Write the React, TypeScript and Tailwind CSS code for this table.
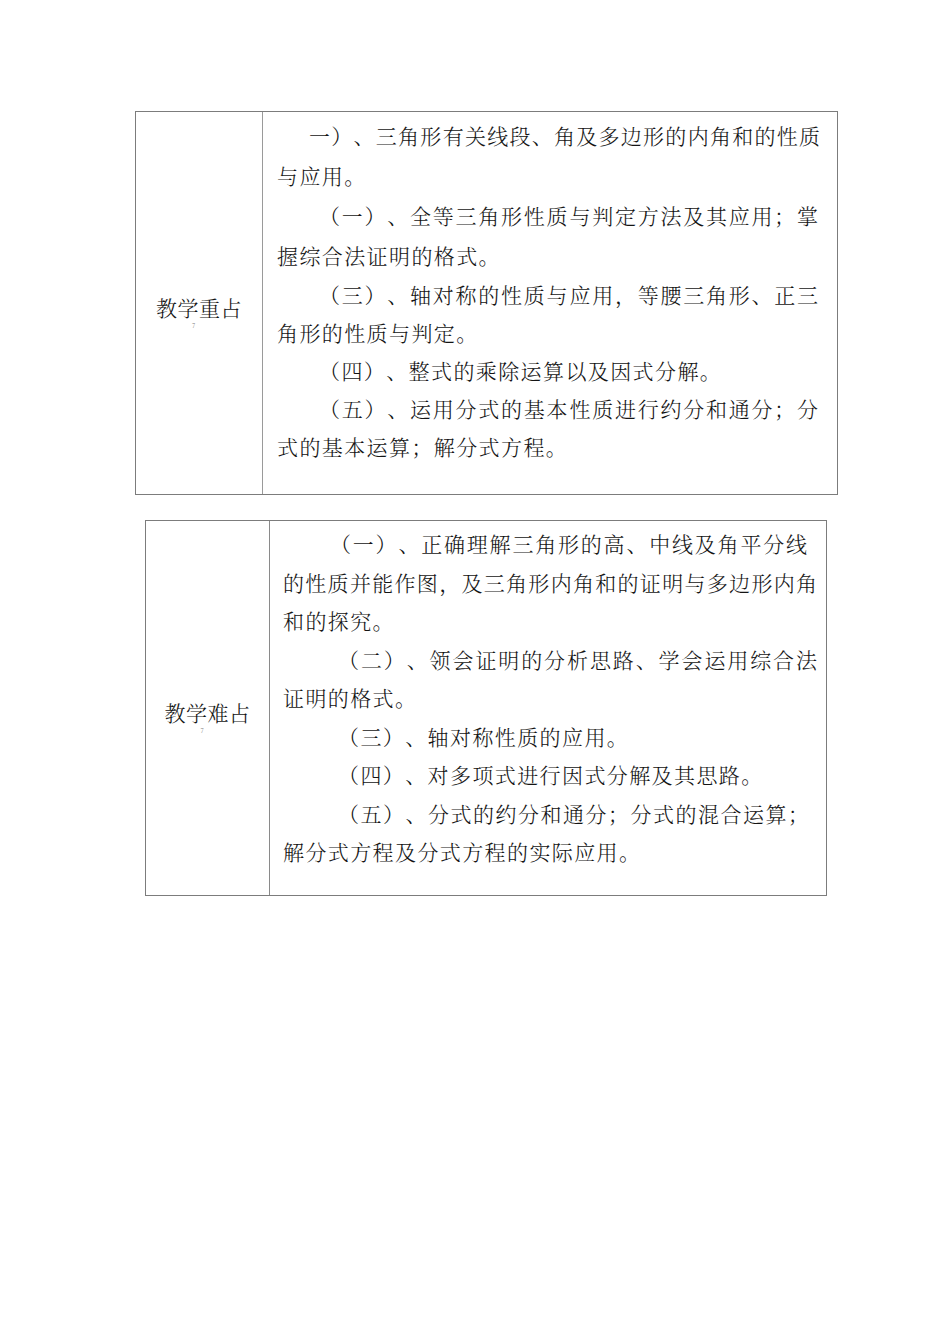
type Line = { t: string; indent?: number; full?: boolean; mr?: number };

const font = {
  fontFamily: "'Noto Serif CJK SC', 'Noto Sans CJK SC', 'Liberation Serif', serif",
};

const focus: Line[][] = [
  [
    { t: "一）、三角形有关线段、角及多边形的内角和的性质", indent: 32, full: true },
    { t: "与应用。" },
  ],
  [
    { t: "（一）、全等三角形性质与判定方法及其应用；掌", indent: 42, full: true, mr: 2 },
    { t: "握综合法证明的格式。" },
  ],
  [
    { t: "（三）、轴对称的性质与应用，等腰三角形、正三", indent: 42, full: true, mr: 2 },
    { t: "角形的性质与判定。" },
  ],
  [{ t: "（四）、整式的乘除运算以及因式分解。", indent: 42 }],
  [
    { t: "（五）、运用分式的基本性质进行约分和通分；分", indent: 42, full: true, mr: 2 },
    { t: "式的基本运算；解分式方程。" },
  ],
];

const hard: Line[][] = [
  [
    { t: "（一）、正确理解三角形的高、中线及角平分线", indent: 47, full: true, mr: 10 },
    { t: "的性质并能作图，及三角形内角和的证明与多边形内角", full: true },
    { t: "和的探究。" },
  ],
  [
    { t: "（二）、领会证明的分析思路、学会运用综合法", indent: 55, full: true },
    { t: "证明的格式。" },
  ],
  [{ t: "（三）、轴对称性质的应用。", indent: 55 }],
  [{ t: "（四）、对多项式进行因式分解及其思路。", indent: 55 }],
  [
    { t: "（五）、分式的约分和通分；分式的混合运算；", indent: 55, full: true, mr: 8 },
    { t: "解分式方程及分式方程的实际应用。" },
  ],
];

function TextLine({ line, h }: { line: Line; h: string }) {
  return (
    <div
      className={`${h} whitespace-nowrap ${line.full ? "text-justify [text-align-last:justify]" : "tracking-[1.4px]"}`}
      style={{ paddingLeft: line.indent ?? 0, marginRight: line.mr ?? 0 }}
    >
      {line.t}
    </div>
  );
}

function Label({ text, pad }: { text: string; pad: string }) {
  return (
    <div className={`flex flex-col items-center justify-center ${pad}`}>
      <div className="text-[21px] leading-[28px] tracking-[0.5px]">{text}</div>
      <div className="mr-[11px] text-[6px] leading-[10px] text-[#777]">7</div>
    </div>
  );
}

export default function App() {
  return (
    <div
      className="min-h-[1344px] w-[950px] bg-white pt-[111px] text-[21px] font-light text-[#141414] [text-spacing-trim:space-all]"
      style={font}
    >
      {/* 教学重占 */}
      <div className="ml-[135px] flex w-[703px] border border-[#7c7c7c]">
        <div className="flex w-[127px] flex-none justify-center border-r border-[#9a9a9a]">
          <Label text="教学重占" pad="pt-[18px]" />
        </div>
        <div className="flex-1 pt-[3px] pr-[17px] pb-[29px] pl-[14px]">
          {focus.map((p, i) =>
            p.map((line, j) => (
              <TextLine key={`${i}-${j}`} line={line} h={i < 2 ? "leading-[40px]" : "leading-[38px]"} />
            ))
          )}
        </div>
      </div>

      {/* 教学难占 */}
      <div className="mt-[25px] ml-[145px] flex w-[682px] border border-[#7c7c7c]">
        <div className="flex w-[124px] flex-none justify-center border-r border-[#8a8a8a]">
          <Label text="教学难占" pad="pt-[18px]" />
        </div>
        <div className="flex-1 pt-[3px] pr-[9px] pb-[24px] pl-[13px]">
          {hard.map((p, i) =>
            p.map((line, j) => <TextLine key={`${i}-${j}`} line={line} h="leading-[38.5px]" />)
          )}
        </div>
      </div>
    </div>
  );
}
